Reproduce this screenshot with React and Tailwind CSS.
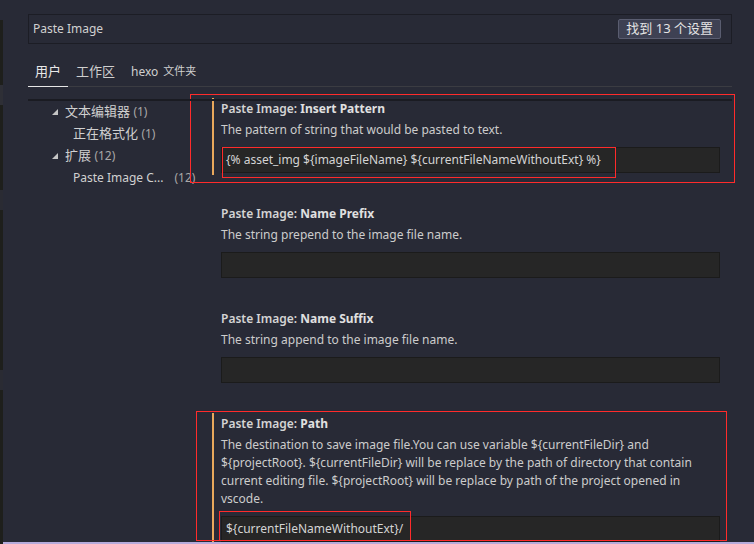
import React from "react";

const FONT = { fontFamily: '"Noto Sans", "Noto Sans CJK SC", sans-serif' };

function Twistie() {
  return (
    <svg width="6" height="6" viewBox="0 0 6 6" className="shrink-0">
      <path d="M6 0 L6 6 L0 6 Z" fill="#c5c5c5" />
    </svg>
  );
}

function Setting({ prefix, name, desc, value, active, last }) {
  return (
    <div
      className={
        "border-l-2 pl-[7px] pt-[1px] pb-[2px] " +
        (active ? "border-[#e8a85c] " : "border-transparent ") +
        (last ? "" : "mb-[28px]")
      }
    >
      <div className="h-[18px] leading-[20px] text-[12px] text-[#d4d4d4] whitespace-nowrap">
        <span className="font-semibold">{prefix}</span>
        <span className="font-bold text-[#e0e0e0]">{name}</span>
      </div>
      <div className="mt-[4px] leading-[18px] text-[12px] text-[#cccccc] pr-[18px]">{desc}</div>
      <div className="mt-[8px] h-[26px] bg-[#262626] border border-[#1b1b1b] flex items-center pl-[4px] text-[12px] text-[#d4d4d4] whitespace-nowrap overflow-hidden">
        {value}
      </div>
    </div>
  );
}

export default function App() {
  return (
    <div className="w-[754px] h-[544px] overflow-hidden bg-[#282a36] flex relative" style={FONT}>
      <div className="w-[3px] shrink-0 flex flex-col">
        <div className="h-[20px] bg-[#282a36]" />
        <div className="h-[65px] bg-[#1e1f1c]" />
        <div className="h-[20px] bg-[#2e2f36]" />
        <div className="h-[85px] bg-[#1e1f1c]" />
        <div className="h-[20px] bg-[#2a2b33]" />
        <div className="h-[160px] bg-[#1e1f1c]" />
        <div className="h-[20px] bg-[#2a2b33]" />
        <div className="flex-1 bg-[#1e1f1c]" />
      </div>
      <div className="flex-1 flex flex-col pl-[25px] pr-[22px]">
        <div className="mt-[14px] h-[30px] border border-[#1c1d25] flex items-center justify-between pl-[4px] pr-[10px]">
          <span className="text-[12px] text-[#d0d0d0]">Paste Image</span>
          <span className="h-[20px] px-[7px] flex items-center bg-[#3e4153] border border-[#5a5d70] rounded-[2px] text-[13px] text-[#e4e4e4]">
            找到 13 个设置
          </span>
        </div>
        <div className="mt-[13px] h-[30px] flex items-stretch border-b border-[#3b3c42]">
          <div className="px-[7px] flex items-center border-b border-[#e6e6e6] -mb-px text-[13px] text-[#e8e8e8]">用户</div>
          <div className="px-[8px] flex items-center text-[13px] text-[#cfcfcf]">工作区</div>
          <div className="px-[8px] flex items-center text-[12px] text-[#cfcfcf]">
            hexo<span className="ml-[5px] text-[11px]">文件夹</span>
          </div>
        </div>
        <div className="relative flex-1 flex mt-[11px]">
          <div className="absolute left-0 right-0 top-[1px] h-[2px] bg-[#1a1b22] z-10" />
          <div className="w-[184px] shrink-0 pt-[3px] text-[13px]">
            <div className="h-[22px] flex items-center pl-[24px] gap-[7px]">
              <Twistie />
              <span className="text-[#d0d0d0]">
                文本编辑器 <span className="text-[12px] text-[#a8a8a8]">(1)</span>
              </span>
            </div>
            <div className="h-[22px] flex items-center pl-[45px]">
              <span className="text-[#d0d0d0]">
                正在格式化 <span className="text-[12px] text-[#a8a8a8]">(1)</span>
              </span>
            </div>
            <div className="h-[22px] flex items-center pl-[24px] gap-[7px]">
              <Twistie />
              <span className="text-[#d0d0d0]">
                扩展 <span className="text-[12px] text-[#a8a8a8]">(12)</span>
              </span>
            </div>
            <div className="h-[22px] flex items-center pl-[45px] whitespace-nowrap text-[12px]">
              <span className="text-[#d0d0d0]">Paste Image C...</span>
              <span className="ml-[11px] text-[#a8a8a8]">(12)</span>
            </div>
          </div>
          <div className="flex-1 pr-[12px]">
            <Setting
              active
              prefix="Paste Image: "
              name="Insert Pattern"
              desc="The pattern of string that would be pasted to text."
              value="{% asset_img ${imageFileName} ${currentFileNameWithoutExt} %}"
            />
            <Setting
              prefix="Paste Image: "
              name="Name Prefix"
              desc="The string prepend to the image file name."
              value=""
            />
            <Setting
              prefix="Paste Image: "
              name="Name Suffix"
              desc="The string append to the image file name."
              value=""
            />
            <Setting
              active
              last
              prefix="Paste Image: "
              name="Path"
              desc="The destination to save image file.You can use variable ${currentFileDir} and ${projectRoot}. ${currentFileDir} will be replace by the path of directory that contain current editing file. ${projectRoot} will be replace by path of the project opened in vscode."
              value="${currentFileNameWithoutExt}/"
            />
          </div>
        </div>
      </div>
      <div className="absolute left-[3px] right-0 bottom-0 h-[2px] bg-[#b6abdb]" />
      <div className="absolute left-[190px] top-[94px] w-[545px] h-[89px] border border-[#ff2b2b]" />
      <div className="absolute left-[222px] top-[147px] w-[394px] h-[31px] border border-[#ff2b2b]" />
      <div className="absolute left-[196px] top-[411px] w-[531px] h-[130px] border border-[#ff2b2b]" />
      <div className="absolute left-[219px] top-[511px] w-[192px] h-[30px] border border-[#ff2b2b]" />
    </div>
  );
}
